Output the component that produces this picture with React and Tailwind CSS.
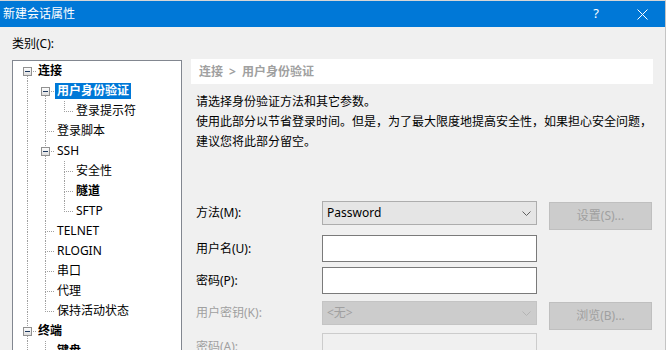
import React from "react";

/* --- tree line cell --- */
// kind: I = straight down, T = down + branch, L = corner, Ed / Eud = expander box
const TreeCell = ({ kind, w }) => {
  const exp = kind.startsWith("E");
  const up = kind === "I" || kind === "T" || kind === "L" || kind === "Eud";
  const down = kind === "I" || kind === "T" || kind === "Ed" || kind === "Eud";
  const branch = kind !== "I";
  return (
    <svg width={w} height="20" className="shrink-0" shapeRendering="crispEdges">
      <defs>
        <linearGradient id="expfill" x1="0" y1="0" x2="0" y2="1">
          <stop offset="0" stopColor="#ffffff" />
          <stop offset="1" stopColor="#dcdcdc" />
        </linearGradient>
      </defs>
      {up && <line x1="9.5" y1="0" x2="9.5" y2={exp ? 6 : 11} stroke="#a0a0a0" strokeDasharray="1 1" />}
      {down && <line x1="9.5" y1={exp ? 15 : 11} x2="9.5" y2="20" stroke="#a0a0a0" strokeDasharray="1 1" />}
      {branch && <line x1={exp ? 15 : 11} y1="10.5" x2={w} y2="10.5" stroke="#a0a0a0" strokeDasharray="1 1" />}
      {exp && (
        <>
          <rect x="5.5" y="6.5" width="8" height="8" fill="url(#expfill)" stroke="#919191" />
          <line x1="7" y1="10.5" x2="12" y2="10.5" stroke="#1f3a60" />
        </>
      )}
    </svg>
  );
};

const treeRows = [
  { cells: ["Ed"], label: "连接", bold: true },
  { cells: ["I", "Ed"], label: "用户身份验证", bold: true, selected: true },
  { cells: ["I", "I", "L"], label: "登录提示符" },
  { cells: ["I", "T"], label: "登录脚本" },
  { cells: ["I", "Eud"], label: "SSH" },
  { cells: ["I", "I", "T"], label: "安全性" },
  { cells: ["I", "I", "T"], label: "隧道", bold: true },
  { cells: ["I", "I", "L"], label: "SFTP" },
  { cells: ["I", "T"], label: "TELNET" },
  { cells: ["I", "T"], label: "RLOGIN" },
  { cells: ["I", "T"], label: "串口" },
  { cells: ["I", "T"], label: "代理" },
  { cells: ["I", "L"], label: "保持活动状态" },
  { cells: ["Eud"], label: "终端", bold: true },
  { cells: ["I", "T"], label: "键盘", bold: true },
];

const colWidths = [18, 19, 19];

const Chevron = ({ color }) => (
  <svg width="9" height="5" viewBox="0 0 9 5" fill="none">
    <path d="M0.5 0.5 L4.5 4.5 L8.5 0.5" stroke={color} strokeWidth="1" />
  </svg>
);

const DisabledButton = ({ children }) => (
  <div className="ml-[12px] mt-px w-[103px] h-[28px] shrink-0 bg-[#cccccc] border border-[#bfbfbf] flex items-center justify-center text-[#a0a0a0]">
    {children}
  </div>
);

export default function App() {
  return (
    <div className="w-[666px] h-[350px] overflow-hidden bg-[#f0f0f0] border-r border-[#c4c4c4] border-t border-t-[#d6d6d6] text-[12px] text-black font-[family-name:'Noto_Sans','Noto_Sans_CJK_SC',sans-serif]">
      {/* Title bar */}
      <div className="h-[26px] bg-[#0078d7] flex items-center text-white">
        <span className="pl-[3px] leading-[16px]">新建会话属性</span>
        <div className="ml-auto flex">
          <div className="w-[46px] h-[26px] flex items-center justify-center text-[13px]">?</div>
          <div className="w-[46px] h-[26px] flex items-center justify-center">
            <svg width="11" height="11" viewBox="0 0 11 11">
              <path d="M0.5 0.5 L10.5 10.5 M10.5 0.5 L0.5 10.5" stroke="#ffffff" strokeWidth="1" />
            </svg>
          </div>
        </div>
      </div>

      <div className="flex">
        {/* Category tree */}
        <div className="pl-[12px] pt-[9px] w-[182px] shrink-0">
          <div className="h-[16px] leading-[16px]">类别(C):</div>
          <div className="mt-[8px] h-[300px] bg-white border border-[#828790] pl-[5px]">
            {treeRows.map((row, i) => (
              <div key={i} className="h-[20px] flex items-center">
                {row.cells.map((c, j) => (
                  <TreeCell key={j} kind={c} w={colWidths[j]} />
                ))}
                <span
                  className={`px-[2px] h-[16px] leading-[16px] whitespace-nowrap ${row.bold ? "font-bold" : ""} ${
                    row.selected ? "bg-[#0078d7] text-white" : ""
                  }`}
                >
                  {row.label}
                </span>
              </div>
            ))}
          </div>
        </div>

        {/* Right panel */}
        <div className="ml-[9px] pt-[32px] w-[462px]">
          <div className="h-[25px] bg-white px-[8px] flex items-center text-[#a0a0a0] font-bold whitespace-nowrap">
            <span>连接</span>
            <span className="mx-[6px]">&gt;</span>
            <span>用户身份验证</span>
          </div>

          <div className="pl-[5px] mt-[8px] whitespace-nowrap">
            <div className="leading-[20px]">请选择身份验证方法和其它参数。</div>
            <div className="leading-[20px]">使用此部分以节省登录时间。但是，为了最大限度地提高安全性，如果担心安全问题，</div>
            <div className="leading-[19px]">建议您将此部分留空。</div>
          </div>

          {/* Form */}
          <div className="pl-[5px] mt-[50px]">
            <div className="h-[24px] flex items-start">
              <div className="w-[126px] h-[24px] flex items-center shrink-0">方法(M):</div>
              <div className="w-[215px] h-[24px] shrink-0 bg-[#e5e5e5] border border-[#adadad] flex items-center justify-between pl-[4px] pr-[5px]">
                <span>Password</span>
                <Chevron color="#606060" />
              </div>
              <DisabledButton>设置(S)...</DisabledButton>
            </div>

            <div className="mt-[10px] h-[27px] flex items-center">
              <div className="w-[126px] shrink-0">用户名(U):</div>
              <div className="w-[215px] h-[27px] shrink-0 bg-white border border-[#7a7a7a]" />
            </div>

            <div className="mt-[5px] h-[27px] flex items-center">
              <div className="w-[126px] shrink-0">密码(P):</div>
              <div className="w-[215px] h-[27px] shrink-0 bg-white border border-[#7a7a7a]" />
            </div>

            <div className="mt-[7px] h-[24px] flex items-start">
              <div className="w-[126px] h-[24px] flex items-center shrink-0 text-[#a0a0a0]">用户密钥(K):</div>
              <div className="w-[215px] h-[24px] shrink-0 bg-[#cccccc] border border-[#c4c4c4] flex items-center justify-between pl-[4px] pr-[5px] text-[#a0a0a0]">
                <span>&lt;无&gt;</span>
                <Chevron color="#b4b4b4" />
              </div>
              <DisabledButton>浏览(B)...</DisabledButton>
            </div>

            <div className="mt-[8px] h-[27px] flex items-center">
              <div className="w-[126px] shrink-0 text-[#a0a0a0]">密码(A):</div>
              <div className="w-[215px] h-[27px] shrink-0 bg-[#f0f0f0] border border-[#cccccc]" />
            </div>
          </div>
        </div>
      </div>
    </div>
  );
}
